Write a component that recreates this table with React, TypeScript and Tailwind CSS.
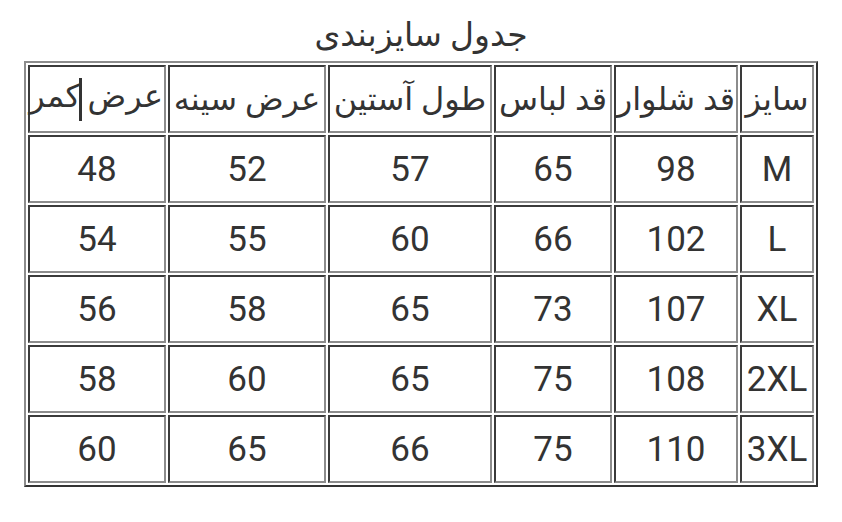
import React from "react";

const sarTitr = [
  { matn: "سایز", pahna: "w-[74px]" },
  { matn: "قد شلوار", pahna: "w-[124px]" },
  { matn: "قد لباس", pahna: "w-[118px]" },
  { matn: "طول آستین", pahna: "w-[164px]" },
  { matn: "عرض سینه", pahna: "w-[158px]" },
  { matn: "کمر", pahna: "w-[138px]" },
];

const radifha = [
  ["M", "98", "65", "57", "52", "48"],
  ["L", "102", "66", "60", "55", "54"],
  ["XL", "107", "73", "65", "58", "56"],
  ["2XL", "108", "75", "65", "60", "58"],
  ["3XL", "110", "75", "66", "65", "60"],
];

const khane =
  "h-[68px] p-px text-center align-middle border-2 border-t-[#3a3a3a] border-l-[#3a3a3a] border-b-[#8c8c8c] border-r-[#8c8c8c] whitespace-nowrap";

const App = () => {
  return (
    <div
      className="w-[842px] h-[522px] bg-white text-[#333]"
      style={{ fontFamily: "Roboto, 'DejaVu Sans', sans-serif" }}
    >
      <div className="h-[61px] flex items-center justify-center pt-2">
        <h1 className="text-[33px] leading-none" dir="rtl">
          جدول سایزبندی
        </h1>
      </div>

      <table
        dir="rtl"
        className="mx-auto w-[794px] table-fixed border-separate border-spacing-[2px] border-2 border-t-[#8c8c8c] border-l-[#8c8c8c] border-b-[#333] border-r-[#333]"
      >
        <thead>
          <tr>
            {sarTitr.map((sar, i) => (
              <th
                key={i}
                className={`${khane} ${sar.pahna} font-normal text-[32px] leading-none`}
              >
                {i === 5 ? (
                  <span>
                    عرض{" "}
                    <span className="inline-block w-[3px] h-[43px] bg-[#333] align-middle -mx-[2px]" />
                    کمر
                  </span>
                ) : (
                  sar.matn
                )}
              </th>
            ))}
          </tr>
        </thead>
        <tbody>
          {radifha.map((radif, r) => (
            <tr key={r}>
              {radif.map((adad, c) => (
                <td key={c} className={`${khane} text-[35px] leading-none`}>
                  {adad}
                </td>
              ))}
            </tr>
          ))}
        </tbody>
      </table>
    </div>
  );
};

export default App;
